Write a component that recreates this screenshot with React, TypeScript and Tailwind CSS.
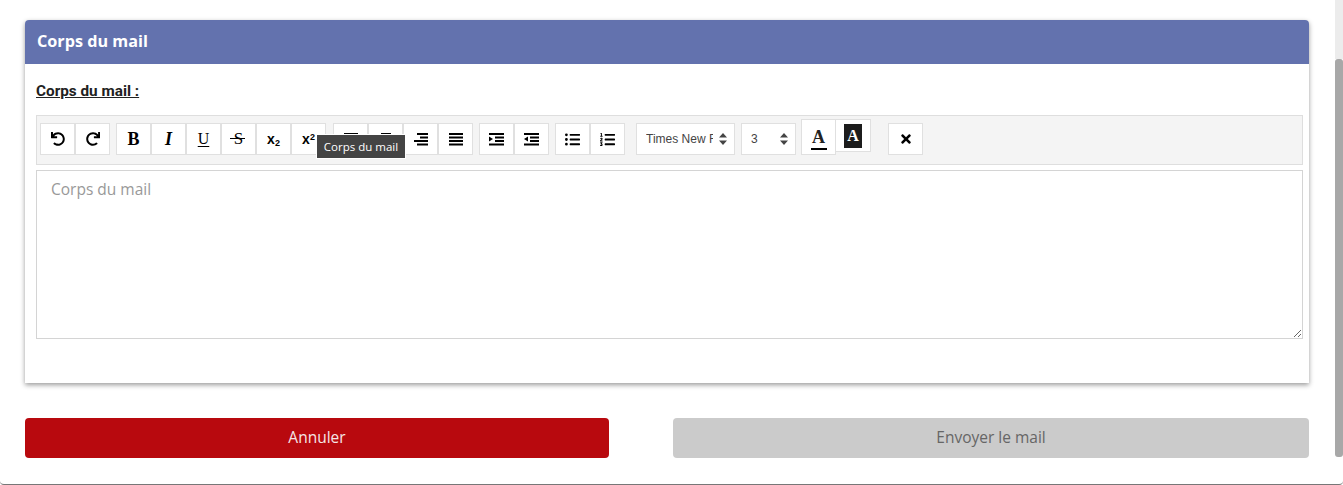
import type { ReactNode } from "react";
import { FaListOl, FaListUl, FaRedo, FaTimes, FaUndo } from "react-icons/fa";

const serif = "font-['Liberation_Serif',serif]";

function ToolButton({ children, className = "" }: { children: ReactNode; className?: string }) {
  return (
    <div className={`flex h-8 w-[35px] items-center justify-center border border-[#e0e0e0] bg-white text-black ${className}`}>
      {children}
    </div>
  );
}

// lines[i] = [x, width] of each horizontal bar, 4 bars stacked
function BarsIcon({ lines, arrow }: { lines: [number, number][]; arrow?: "in" | "out" }) {
  return (
    <svg width="16" height="14" viewBox="0 0 16 14" fill="black">
      {lines.map(([x, w], i) => (
        <rect key={i} x={x} y={1 + i * 3.5} width={w} height="2" />
      ))}
      {arrow === "in" ? <path d="M0 4.5 L4 7 L0 9.5 Z" /> : null}
      {arrow === "out" ? <path d="M4 4.5 L0 7 L4 9.5 Z" /> : null}
    </svg>
  );
}

function Arrows() {
  return (
    <svg width="8" height="12" viewBox="0 0 8 12" fill="#444">
      <path d="M4 0 L8 4.6 H0 Z M4 12 L8 7.4 H0 Z" />
    </svg>
  );
}

function FontSelect({ label, className, textClass }: { label: string; className: string; textClass: string }) {
  return (
    <div className={`flex h-8 items-center justify-between border border-[#e0e0e0] bg-white pr-[7px] font-['Liberation_Sans',sans-serif] text-xs text-[#444] ${className}`}>
      <span className={`overflow-hidden whitespace-nowrap ${textClass}`}>{label}</span>
      <Arrows />
    </div>
  );
}

export default function App() {
  return (
    <div className="flex h-[485px] w-[1343px] overflow-hidden bg-white font-['Open_Sans',sans-serif]">
      <div className="w-[1335px] shrink-0 pl-[25px] pt-5">
        <section className="w-[1284px] rounded-t bg-white shadow-[0_2px_5px_rgba(0,0,0,0.4)]">
          <h2 className="flex h-11 items-center rounded-t bg-[#6372ae] px-3 pb-[2px] text-[16.2px] font-bold text-white">
            Corps du mail
          </h2>
          <div className="h-[319px] px-[11px] pt-[17px]">
            <div className="h-[34px] font-['Roboto',sans-serif] text-[15.3px] font-bold leading-5 text-[#212121] underline">
              Corps du mail :
            </div>
            <div className="relative flex h-[50px] w-[1267px] items-start gap-[6px] border border-[#dedede] bg-[#f4f4f4] pl-[3px] pt-[7px]">
              <div className="flex">
                <ToolButton><FaUndo size={14} /></ToolButton>
                <ToolButton><FaRedo size={14} /></ToolButton>
              </div>
              <div className="flex">
                <ToolButton><span className={`${serif} text-lg font-bold`}>B</span></ToolButton>
                <ToolButton><span className={`${serif} text-lg font-bold italic`}>I</span></ToolButton>
                <ToolButton><span className={`${serif} text-base underline underline-offset-2`}>U</span></ToolButton>
                <ToolButton>
                  <span className={`${serif} relative text-[17px]`}>
                    S
                    <span className="absolute left-[-4px] top-[12px] h-px w-[15px] bg-black" />
                  </span>
                </ToolButton>
                <ToolButton>
                  <span className="font-['Liberation_Sans',sans-serif] text-sm font-bold">x<sub className="text-[9px]">2</sub></span>
                </ToolButton>
                <ToolButton>
                  <span className="font-['Liberation_Sans',sans-serif] text-sm font-bold">x<sup className="text-[9px]">2</sup></span>
                </ToolButton>
              </div>
              <div className="ml-px flex">
                <ToolButton><BarsIcon lines={[[1, 14], [3, 10], [1, 14], [3, 10]]} /></ToolButton>
                <ToolButton><BarsIcon lines={[[3, 10], [1, 14], [3, 10], [1, 14]]} /></ToolButton>
                <ToolButton><BarsIcon lines={[[4, 11], [7, 8], [1, 14], [4, 11]]} /></ToolButton>
                <ToolButton><BarsIcon lines={[[1, 14], [1, 14], [1, 14], [1, 14]]} /></ToolButton>
              </div>
              <div className="flex">
                <ToolButton><BarsIcon lines={[[0, 15], [6, 9], [6, 9], [0, 15]]} arrow="in" /></ToolButton>
                <ToolButton><BarsIcon lines={[[0, 15], [6, 9], [6, 9], [0, 15]]} arrow="out" /></ToolButton>
              </div>
              <div className="flex">
                <ToolButton><FaListUl size={15} /></ToolButton>
                <ToolButton><FaListOl size={15} /></ToolButton>
              </div>
              <FontSelect label="Times New Roman" className="ml-[5px] w-[99px] pl-[9px]" textClass="w-[67px]" />
              <FontSelect label="3" className="w-[55px] pl-[9px]" textClass="w-[20px]" />
              <div className="-ml-px -mt-1 flex items-start">
                <div className="flex h-9 w-[35px] flex-col items-center justify-end border border-[#e0e0e0] bg-white pb-[4px]">
                  <span className={`${serif} text-lg font-bold leading-5 text-[#222]`}>A</span>
                  <span className="mt-px h-0.5 w-4 bg-black" />
                </div>
                <div className="flex h-[33px] w-[35px] items-center justify-center border border-l-0 border-[#e0e0e0] bg-white">
                  <span className={`${serif} flex h-6 w-[18px] items-center justify-center bg-[#1c1c1c] text-base font-bold text-white`}>A</span>
                </div>
              </div>
              <ToolButton className="ml-[11px]"><FaTimes size={14} /></ToolButton>
              <div className="absolute left-[279px] top-[18px] flex h-[25px] w-[90px] items-center justify-center border border-white bg-[#444] text-[11.5px] text-white">
                Corps du mail
              </div>
            </div>
            <textarea
              readOnly
              placeholder="Corps du mail"
              className="mt-[5px] block h-[169px] w-[1267px] border border-[#d4d4d4] bg-white px-[14px] py-[7px] text-[15.5px] text-[#333] outline-none placeholder:text-[#999]"
            />
          </div>
        </section>
        <div className="mt-[35px] flex w-[1284px] justify-between">
          <button className="h-10 w-[584px] rounded bg-[#b8090e] pb-px text-[15.5px] font-medium text-[#f5e6e6]">Annuler</button>
          <button className="h-10 w-[636px] rounded bg-[#cbcbcb] pb-px text-[15.5px] font-medium text-[#666]">Envoyer le mail</button>
        </div>
      </div>
      <div className="h-[484px] w-2 shrink-0">
        <div className="h-[59px] bg-[#ececec]" />
        <div className="h-[398px] rounded-[3px] bg-[#a8a8a8]" />
      </div>
      <div className="pointer-events-none absolute left-0 top-0 h-[485px] w-[1343px] rounded-b-[4px] border-b border-[#777]" />
    </div>
  );
}
